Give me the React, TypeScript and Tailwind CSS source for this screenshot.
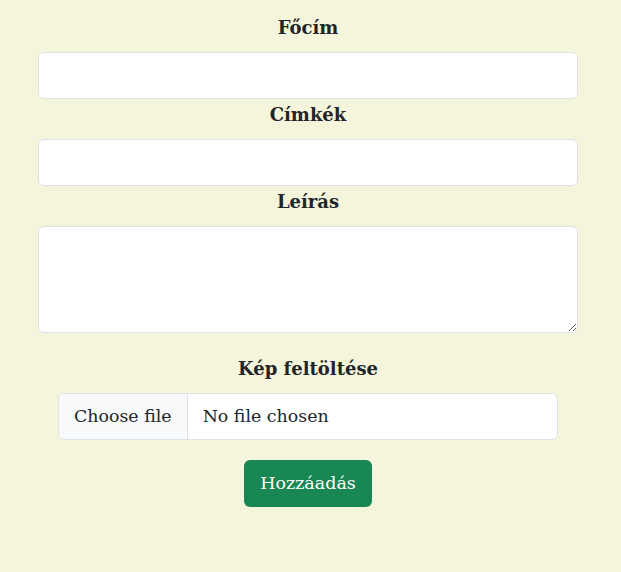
import React from "react";

const font = { fontFamily: '"DejaVu Serif", "Liberation Serif", serif' };

function Label({ children, className = "" }: { children: React.ReactNode; className?: string }) {
  return (
    <div className={"h-[30px] leading-[32px] mb-[10px] text-center font-bold text-[18px] text-[#212529] " + className}>
      {children}
    </div>
  );
}

export default function App() {
  return (
    <div className="min-h-[572px] w-full bg-[#f5f5dc] pt-[12px]" style={font}>
      <div className="ml-[38px] w-[540px] flex flex-col">
        <Label>Főcím</Label>
        <input
          type="text"
          className="h-[47px] w-full rounded-[6px] border border-[#dee2e6] bg-white px-3 outline-none"
          style={font}
        />
        <Label>Címkék</Label>
        <input
          type="text"
          className="h-[47px] w-full rounded-[6px] border border-[#dee2e6] bg-white px-3 outline-none"
          style={font}
        />
        <Label>Leírás</Label>
        <textarea
          className="h-[107px] w-full rounded-[6px] border border-[#dee2e6] bg-white px-3 outline-none block"
          style={font}
        />
        <Label className="mt-[20px]">Kép feltöltése</Label>
        <div className="mx-auto flex h-[47px] w-[500px] overflow-hidden rounded-[6px] border border-[#dee2e6] bg-white text-[17.4px] text-[#212529]">
          <div className="flex items-center bg-[#f8f9fa] border-r border-[#dee2e6] px-[15px]">Choose file</div>
          <div className="flex items-center pl-[15px]">No file chosen</div>
        </div>
        <div className="mt-[20px] flex justify-center">
          <button className="h-[47px] rounded-[6px] bg-[#198754] px-4 text-[17.5px] text-white" style={font}>
            Hozzáadás
          </button>
        </div>
      </div>
    </div>
  );
}
